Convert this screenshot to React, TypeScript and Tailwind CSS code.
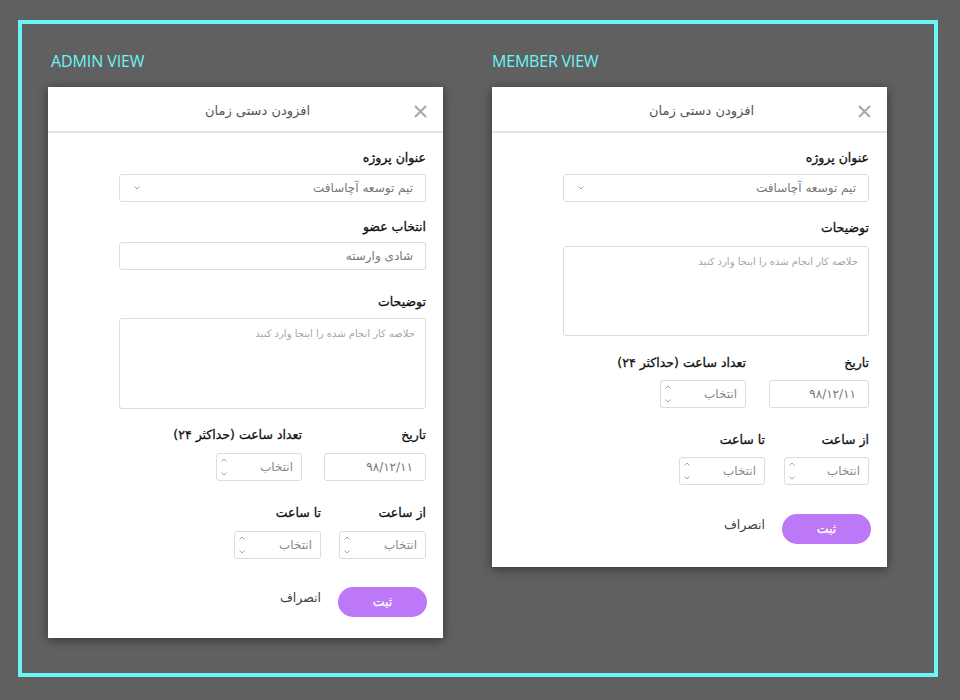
import React from 'react';

const fa = { fontFamily: '"DejaVu Sans", "Noto Sans", sans-serif' };

function Chevron({ up = false }: { up?: boolean }) {
  return (
    <svg width="6" height="4" viewBox="0 0 6 4" className="block">
      <path
        d={up ? 'M0.5 3.5 L3 1 L5.5 3.5' : 'M0.5 0.5 L3 3 L5.5 0.5'}
        fill="none"
        stroke="#9a9a9a"
        strokeWidth="0.9"
      />
    </svg>
  );
}

function Label({ children, className = '' }: { children: React.ReactNode; className?: string }) {
  return (
    <div
      className={`h-5 leading-5 text-[12.5px] text-[#111] [-webkit-text-stroke:0.3px_#111] whitespace-nowrap ${className}`}
    >
      {children}
    </div>
  );
}

function SelectBox({ text }: { text: string }) {
  return (
    <div className="h-[28px] flex items-center justify-between border border-[#dcdcdc] rounded-[3px] pr-3 pl-[14px] text-[12px] text-[#777]">
      <span>{text}</span>
      <Chevron />
    </div>
  );
}

function TextBox({ text }: { text: string }) {
  return (
    <div className="h-[28px] flex items-center border border-[#dcdcdc] rounded-[3px] pr-3 text-[12px] text-[#777]">
      {text}
    </div>
  );
}

function NumberBox({ w }: { w: string }) {
  return (
    <div className={`${w} h-[28px] flex items-center justify-between border border-[#dcdcdc] rounded-[3px] pr-2 pl-1 text-[12px] text-[#888]`}>
      <span>انتخاب</span>
      <div className="flex flex-col justify-between h-full py-[4px]">
        <Chevron up />
        <Chevron />
      </div>
    </div>
  );
}

function TextArea({ h }: { h: string }) {
  return (
    <div className={`${h} border border-[#dcdcdc] rounded-[3px] pr-[10px] pt-[7px] text-[10px] text-[#a5a5a5]`}>
      خلاصه کار انجام شده را اینجا وارد کنید
    </div>
  );
}

function Header() {
  return (
    <div className="h-[46px] relative flex items-center justify-center pl-[24px] pt-[3px] border-b-2 border-[#e4e4e4]">
      <span className="text-[13px] text-[#555]">افزودن دستی زمان</span>
      <svg width="13" height="13" viewBox="0 0 13 13" className="absolute right-[16px] top-[18px]">
        <path d="M1 1 L12 12 M12 1 L1 12" stroke="#ababab" strokeWidth="2.2" />
      </svg>
    </div>
  );
}

function Buttons() {
  return (
    <div className="flex items-start gap-[17px]">
      <button className="w-[89px] h-[30px] rounded-full bg-[#bd78f7] text-white text-[12.5px] [-webkit-text-stroke:0.3px_#fff]">
        ثبت
      </button>
      <span className="mt-[1px] leading-5 text-[12.5px] text-[#444]">انصراف</span>
    </div>
  );
}

function AdminCard() {
  return (
    <div dir="rtl" style={fa} className="w-[395px] bg-white shadow-[0_2px_10px_rgba(0,0,0,0.45)]">
      <Header />
      <div className="pr-[17px] pl-[71px] pt-[15px] pb-[21px]">
        <Label className="mb-[6px]">عنوان پروژه</Label>
        <SelectBox text="تیم توسعه آچاسافت" />
        <Label className="mt-[15px] mb-[5px]">انتخاب عضو</Label>
        <TextBox text="شادی وارسته" />
        <Label className="mt-[22px] mb-[6px]">توضیحات</Label>
        <TextArea h="h-[91px]" />
        <div className="mt-[16px] flex gap-[22px]">
          <div className="w-[102px]">
            <Label className="mb-[8px]">تاریخ</Label>
            <TextBox text="۹۸/۱۲/۱۱" />
          </div>
          <div className="w-[86px]">
            <Label className="mb-[8px]">تعداد ساعت (حداکثر ۲۴)</Label>
            <NumberBox w="w-[86px]" />
          </div>
        </div>
        <div className="mt-[22px] flex gap-[18px]">
          <div className="w-[87px]">
            <Label className="mb-[8px]">از ساعت</Label>
            <NumberBox w="w-[87px]" />
          </div>
          <div className="w-[87px]">
            <Label className="mb-[8px]">تا ساعت</Label>
            <NumberBox w="w-[87px]" />
          </div>
        </div>
        <div className="mt-[28px] -mr-[1px]">
          <Buttons />
        </div>
      </div>
    </div>
  );
}

function MemberCard() {
  return (
    <div dir="rtl" style={fa} className="w-[395px] bg-white shadow-[0_2px_10px_rgba(0,0,0,0.45)]">
      <Header />
      <div className="pr-[18px] pl-[71px] pt-[15px] pb-[23px]">
        <Label className="mb-[6px]">عنوان پروژه</Label>
        <SelectBox text="تیم توسعه آچاسافت" />
        <Label className="mt-[16px] mb-[8px]">توضیحات</Label>
        <TextArea h="h-[90px]" />
        <div className="mt-[17px] flex gap-[23px]">
          <div className="w-[100px]">
            <Label className="mb-[7px]">تاریخ</Label>
            <TextBox text="۹۸/۱۲/۱۱" />
          </div>
          <div className="w-[86px]">
            <Label className="mb-[7px]">تعداد ساعت (حداکثر ۲۴)</Label>
            <NumberBox w="w-[86px]" />
          </div>
        </div>
        <div className="mt-[22px] flex gap-[19px]">
          <div className="w-[85px]">
            <Label className="mb-[7px]">از ساعت</Label>
            <NumberBox w="w-[85px]" />
          </div>
          <div className="w-[86px]">
            <Label className="mb-[7px]">تا ساعت</Label>
            <NumberBox w="w-[86px]" />
          </div>
        </div>
        <div className="mt-[29px] -mr-[2px]">
          <Buttons />
        </div>
      </div>
    </div>
  );
}

export default function App() {
  return (
    <div className="w-[960px] h-[700px] bg-[#606060] pt-[20px] pl-[18px]">
      <div className="w-[920px] h-[657px] border-4 border-[#6cf5f5] flex gap-[49px] pl-[26px] pt-[26px]">
        <div className="flex flex-col">
          <div
            className="h-[22px] leading-[22px] pl-[3px] text-[16px] text-[#6cf5f5] tracking-[-0.1px]"
            style={{ fontFamily: '"Open Sans", sans-serif' }}
          >
            ADMIN VIEW
          </div>
          <div className="mt-[15px]">
            <AdminCard />
          </div>
        </div>
        <div className="flex flex-col">
          <div
            className="h-[22px] leading-[22px] text-[16px] text-[#6cf5f5] tracking-[-0.2px]"
            style={{ fontFamily: '"Open Sans", sans-serif' }}
          >
            MEMBER VIEW
          </div>
          <div className="mt-[15px]">
            <MemberCard />
          </div>
        </div>
      </div>
    </div>
  );
}
